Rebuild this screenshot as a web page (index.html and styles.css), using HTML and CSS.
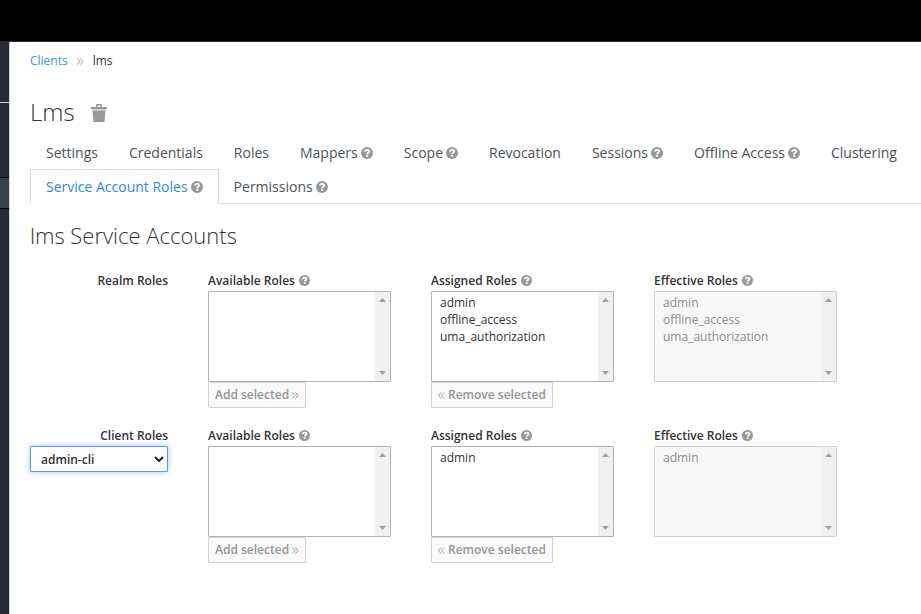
FILE: index.html
```html
<!DOCTYPE html>
<html lang="en">
<head>
<meta charset="utf-8">
<title>Lms - Service Account Roles</title>
<link rel="stylesheet" href="styles.css">
</head>
<body>
<svg class="sprite" aria-hidden="true">
  <symbol id="help" viewBox="0 0 12 12">
    <circle cx="6" cy="6" r="6" fill="#999"/>
    <path d="M4 4.600C4.100 3.300 5 2.800 6.100 2.800C7.300 2.800 8.200 3.500 8.200 4.500C8.200 5.900 6.200 5.700 6.200 7.200" fill="none" stroke="#fff" stroke-width="1.800"/>
    <rect x="5.200" y="8" width="1.900" height="1.700" fill="#fff"/>
  </symbol>
  <symbol id="scroll" viewBox="0 0 15 89">
    <path d="M4 10L7.500 6L11 10ZM4 79L7.500 83L11 79Z" fill="#a0a0a0"/>
  </symbol>
</svg>
<header class="topbar"></header>
<div class="page">
  <nav class="sidebar" aria-label="Realm">
    <div class="realm"></div>
    <div class="menu"></div>
    <div class="menu-active"></div>
  </nav>
  <main class="content">
    <nav class="breadcrumb" aria-label="Breadcrumb">
      <a href="#">Clients</a>
      <svg class="crumb-sep" viewBox="0 0 7 7" aria-hidden="true"><path d="M.5.5L3 3.500L.5 6.500M3.500.5L6 3.500L3.500 6.500"/></svg>
      <span>lms</span>
    </nav>
    <h1 class="title">Lms
      <button class="trash" type="button" aria-label="Delete client"><svg viewBox="0 0 16 18"><path d="M5 3V1Q5 0 6 0H10Q11 0 11 1V3H9.500V1.500H6.500V3Z" fill="#999"/><rect y="3" width="16" height="2" fill="#999"/><rect x="1" y="5" width="14" height="2" fill="#ccc"/><path d="M1.500 7H14.500L13.500 18H2.500Z" fill="#999"/></svg></button>
    </h1>
    <ul class="tabs">
      <li><a href="#">Settings</a></li>
      <li><a href="#">Credentials</a></li>
      <li><a href="#">Roles</a></li>
      <li><a href="#">Mappers <svg class="help"><use href="#help"/></svg></a></li>
      <li><a href="#">Scope <svg class="help"><use href="#help"/></svg></a></li>
      <li><a href="#">Revocation</a></li>
      <li><a href="#">Sessions <svg class="help"><use href="#help"/></svg></a></li>
      <li><a href="#">Offline Access <svg class="help"><use href="#help"/></svg></a></li>
      <li><a href="#">Clustering</a></li>
      <li><a class="active" href="#" aria-current="page">Service Account Roles <svg class="help"><use href="#help"/></svg></a></li>
      <li><a href="#">Permissions <svg class="help"><use href="#help"/></svg></a></li>
    </ul>
    <h2 class="subtitle">lms Service Accounts</h2>
    <form class="roles">
      <div class="role-row">
        <div class="group"><span class="label">Realm Roles</span></div>
        <div class="field">
          <label class="label" for="realm-available">Available Roles <svg class="help small"><use href="#help"/></svg></label>
          <div class="listbox"><select id="realm-available" multiple size="5"></select><svg class="scrollbar"><use href="#scroll"/></svg></div>
          <button class="btn" type="button" disabled>Add selected <svg class="chevrons" viewBox="0 0 7 7"><path d="M.5.5L3 3.500L.5 6.500M3.500.5L6 3.500L3.500 6.500"/></svg></button>
        </div>
        <div class="field">
          <label class="label" for="realm-assigned">Assigned Roles <svg class="help small"><use href="#help"/></svg></label>
          <div class="listbox"><select id="realm-assigned" multiple size="5"><option>admin</option><option>offline_access</option><option>uma_authorization</option></select><svg class="scrollbar"><use href="#scroll"/></svg></div>
          <button class="btn" type="button" disabled><svg class="chevrons" viewBox="0 0 7 7"><path d="M3 .5L.5 3.500L3 6.500M6 .5L3.500 3.500L6 6.500"/></svg> Remove selected</button>
        </div>
        <div class="field">
          <label class="label" for="realm-effective">Effective Roles <svg class="help small"><use href="#help"/></svg></label>
          <div class="listbox"><select id="realm-effective" multiple size="5" disabled><option>admin</option><option>offline_access</option><option>uma_authorization</option></select><svg class="scrollbar"><use href="#scroll"/></svg></div>
        </div>
      </div>
      <div class="role-row">
        <div class="group">
          <label class="label" for="client">Client Roles</label>
          <div class="dropdown"><select id="client"><option>admin-cli</option></select><svg class="caret" viewBox="0 0 10 6" aria-hidden="true"><path d="M1 1L5 5L9 1"/></svg></div>
        </div>
        <div class="field">
          <label class="label" for="client-available">Available Roles <svg class="help small"><use href="#help"/></svg></label>
          <div class="listbox"><select id="client-available" multiple size="5"></select><svg class="scrollbar"><use href="#scroll"/></svg></div>
          <button class="btn" type="button" disabled>Add selected <svg class="chevrons" viewBox="0 0 7 7"><path d="M.5.5L3 3.500L.5 6.500M3.500.5L6 3.500L3.500 6.500"/></svg></button>
        </div>
        <div class="field">
          <label class="label" for="client-assigned">Assigned Roles <svg class="help small"><use href="#help"/></svg></label>
          <div class="listbox"><select id="client-assigned" multiple size="5"><option>admin</option></select><svg class="scrollbar"><use href="#scroll"/></svg></div>
          <button class="btn" type="button" disabled><svg class="chevrons" viewBox="0 0 7 7"><path d="M3 .5L.5 3.500L3 6.500M6 .5L3.500 3.500L6 6.500"/></svg> Remove selected</button>
        </div>
        <div class="field">
          <label class="label" for="client-effective">Effective Roles <svg class="help small"><use href="#help"/></svg></label>
          <div class="listbox"><select id="client-effective" multiple size="5" disabled><option>admin</option></select><svg class="scrollbar"><use href="#scroll"/></svg></div>
        </div>
      </div>
    </form>
  </main>
</div>
</body>
</html>
```
FILE: styles.css
```css
* { box-sizing: border-box; }

body {
  margin: 0;
  min-height: 100vh;
  display: flex;
  flex-direction: column;
  font: 12px/20px "Open Sans", sans-serif;
  color: #333;
  background: #fff;
}

a { color: #0088ce; text-decoration: none; }

.sprite { display: none; }

.topbar {
  height: 42px;
  background: #000;
  border-bottom: 1px solid #292b33;
}

.page { flex: 1; display: flex; }

.sidebar {
  width: 10px;
  flex: none;
  background: #2a2c35;
  border-right: 1px solid #d1d1d1;
}

.realm { height: 61px; border-bottom: 1px solid #d1d1d1; }
.menu { height: 74px; }
.menu-active {
  height: 32px;
  background: #393f44;
  border: solid #030303;
  border-width: 1px 0;
}

.content { flex: 1; min-width: 0; padding: 9px 0 20px 20px; }

.breadcrumb { display: flex; align-items: center; height: 20px; }
.breadcrumb a { color: #3a94dc; }
.crumb-sep { width: 7px; height: 7px; margin: 0 9px; }
.crumb-sep path, .chevrons path { fill: none; stroke: #999; stroke-width: 1; }

.title {
  display: flex;
  align-items: center;
  gap: 16px;
  margin: 25px 0 7px;
  font-size: 24px;
  line-height: 32px;
  font-weight: 300;
}

.trash { display: flex; margin-top: 2px; padding: 0; border: 0; background: none; }
.trash svg { width: 16px; height: 18px; }

.tabs {
  display: flex;
  flex-wrap: wrap;
  margin: 0;
  padding: 0;
  list-style: none;
  border-bottom: 1px solid #e0e0e0;
}

.tabs li { margin-right: -1px; }
.tabs li:nth-last-child(-n+2) { margin-bottom: -1px; }

.tabs a {
  display: flex;
  align-items: center;
  gap: 3px;
  height: 34px;
  padding: 2px 15px 0;
  border: 1px solid transparent;
  font-size: 14px;
  color: #4d5258;
}

.tabs a.active {
  height: 35px;
  padding-top: 1px;
  color: #2e8bd8;
  background: #fff;
  border-color: #dcdcdc;
  border-bottom-color: #fff;
}

.help { width: 12px; height: 12px; flex: none; }
.small { width: 11px; height: 11px; margin-bottom: 1px; }

.subtitle {
  margin: 16px 0 21px;
  font-size: 22px;
  line-height: 30px;
  font-weight: 300;
}

.roles { display: grid; gap: 18px; }

.role-row {
  display: grid;
  grid-template-columns: 138px repeat(3, 183px);
  column-gap: 40px;
}

.label {
  display: flex;
  align-items: center;
  gap: 4px;
  height: 20px;
  font-weight: 600;
}
.group .label { justify-content: flex-end; }

.listbox, .dropdown { position: relative; }

.listbox select {
  display: block;
  width: 100%;
  height: 91px;
  margin: 0;
  padding: 2px 6px;
  border: 1px solid #b3b3b3;
  border-radius: 1px;
  outline: 0;
  background: #fff;
  color: #333;
  font: 12px/17px "Open Sans", sans-serif;
}
.listbox option { min-height: 17px; padding: 0 2px; line-height: 17px; }
.listbox select:disabled { background: #f8f8f8; border-color: #d0d0d0; opacity: 1; }
.listbox select:disabled option { color: #8b8d8f; }

.scrollbar {
  position: absolute;
  top: 1px;
  right: 1px;
  width: 15px;
  height: 89px;
  background: #f0f0f0;
}

.btn {
  display: flex;
  align-items: center;
  gap: 3px;
  width: max-content;
  height: 26px;
  padding: 0 6px;
  border: 1px solid #d1d1d1;
  border-radius: 1px;
  background: #fafafa;
  color: #969696;
  font: 600 12px/20px "Open Sans", sans-serif;
}
.chevrons { width: 7px; height: 7px; }

.dropdown select {
  appearance: none;
  display: block;
  width: 100%;
  height: 26px;
  padding: 1px 10px 0;
  border: 1px solid #5e97ea;
  border-radius: 1px;
  outline: 0;
  background: #fff;
  box-shadow: 0 0 6px #a9c8f8;
  color: #333;
  font: 600 12px/20px "Open Sans", sans-serif;
}
.caret { position: absolute; top: 10px; right: 4px; width: 10px; height: 6px; pointer-events: none; }
.caret path { fill: none; stroke: #222; stroke-width: 2; }
```
